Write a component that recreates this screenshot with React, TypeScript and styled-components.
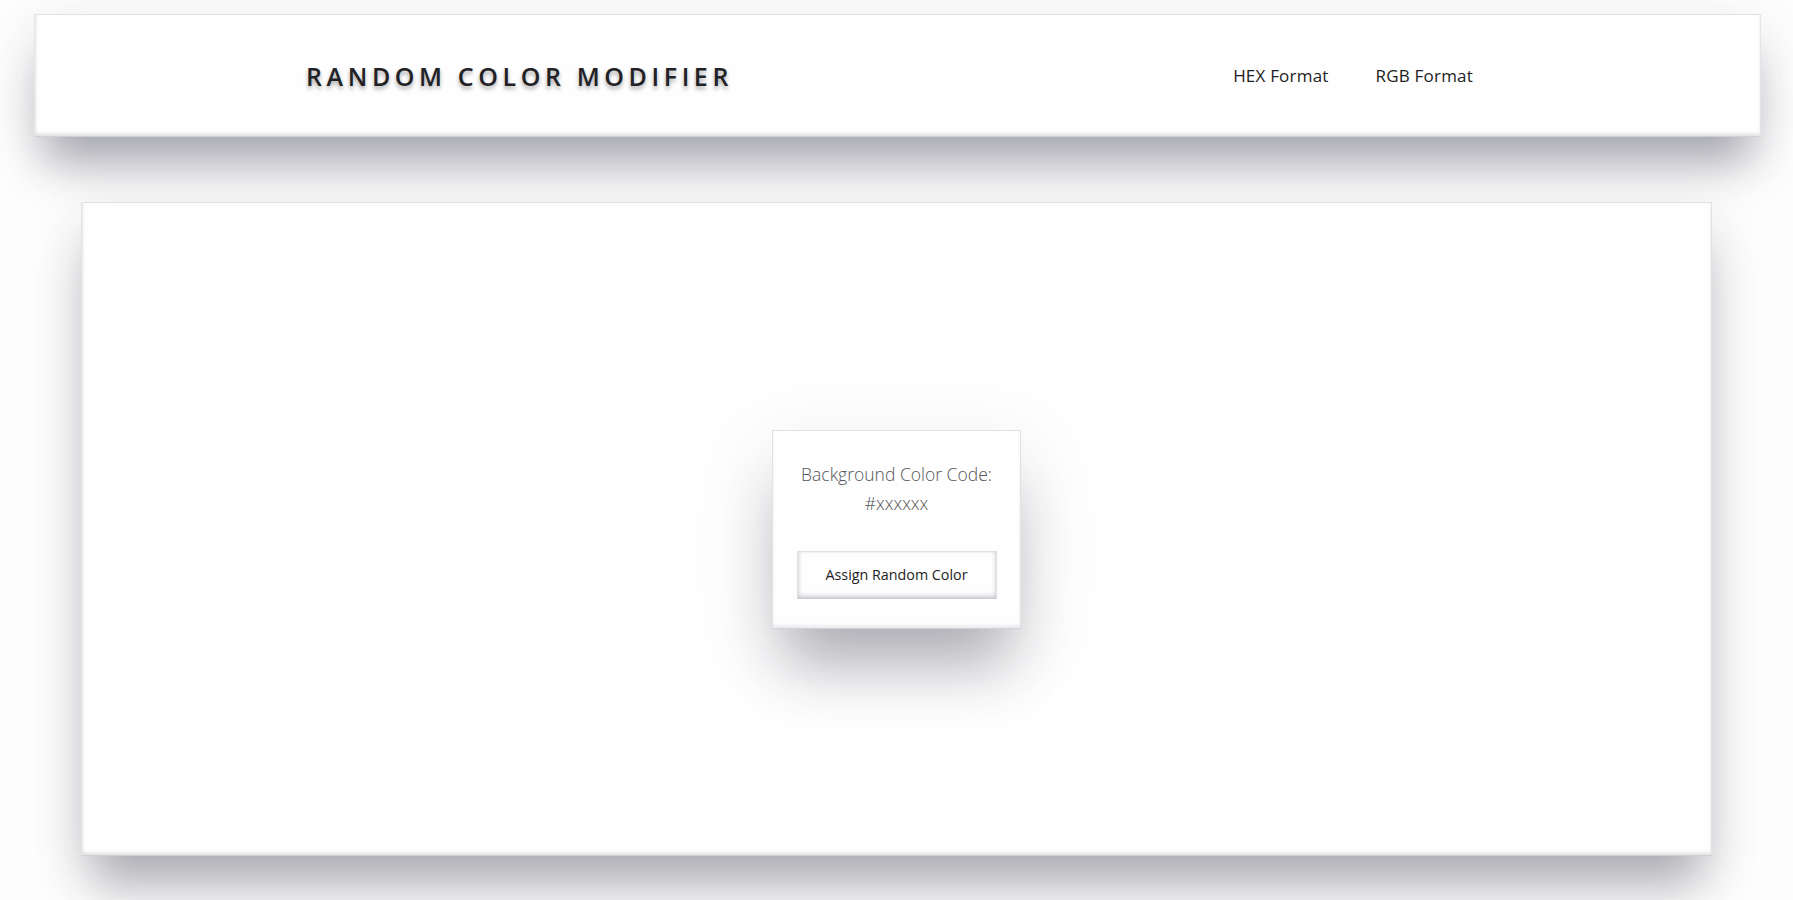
import styled, { createGlobalStyle } from "styled-components";

const GlobalStyle = createGlobalStyle`
   html, body {
      margin: 0;
      padding: 0;
      background-color: #fdfdfd;
      font-family: "Open Sans", "Liberation Sans", sans-serif;
   }
`;

const Page = styled.div`
   padding-top: 14px;
   min-height: 100vh;
   box-sizing: border-box;
`;

const Header = styled.header`
   height: 123px;
   margin: 0 32px 0 34px;
   box-sizing: border-box;
   background-color: #fefefe;
   border: 1px solid #e4e4e8;
   border-bottom-color: #cfcfd5;
   box-shadow: 0 38px 46px -12px rgba(40, 40, 60, 0.36), 0 12px 50px rgba(40, 40, 60, 0.1),
      inset 0 -3px 3px rgba(40, 40, 60, 0.1), inset 2px 0 2px rgba(40, 40, 60, 0.04);
   display: flex;
   align-items: center;
   justify-content: space-between;
   padding: 0 287px 0 271px;
`;

const Title = styled.h1`
   margin: 0;
   font-family: "Open Sans", "Liberation Sans", sans-serif;
   font-size: 25px;
   font-weight: 600;
   letter-spacing: 4.6px;
   color: #222226;
   text-shadow: 0 3px 4px rgba(0, 0, 0, 0.35);
`;

const Nav = styled.nav`
   display: flex;
   gap: 47px;
`;

const NavLink = styled.a`
   font-size: 17px;
   letter-spacing: 0.2px;
   color: #1d1d22;
   text-decoration: none;
   cursor: pointer;
`;

const Main = styled.main`
   width: 91%;
   height: 654px;
   margin: 65px auto 0;
   box-sizing: border-box;
   background-color: #fefefe;
   border: 1px solid #e2e2e6;
   border-bottom-color: #cfcfd5;
   box-shadow: 0 40px 46px -12px rgba(40, 40, 60, 0.34), 0 12px 50px rgba(40, 40, 60, 0.1),
      inset 0 -3px 3px rgba(40, 40, 60, 0.1), inset 2px 0 2px rgba(40, 40, 60, 0.04);
   display: flex;
   align-items: center;
   justify-content: center;
`;

const Card = styled.div`
   width: 249px;
   height: 199px;
   box-sizing: border-box;
   background-color: #fefefe;
   border: 1px solid #e2e2e6;
   border-bottom-color: #d0d0d6;
   box-shadow: 0 48px 56px -14px rgba(40, 40, 60, 0.32), 0 24px 80px rgba(40, 40, 60, 0.1),
      inset 0 -3px 3px rgba(40, 40, 60, 0.08);
   display: flex;
   flex-direction: column;
   align-items: center;
   padding: 29px 20px 0;
`;

const Label = styled.p`
   margin: 0;
   font-size: 17.5px;
   font-weight: 300;
   line-height: 29px;
   color: #555558;
   text-align: center;
   white-space: nowrap;
`;

const Button = styled.button`
   margin-top: 33px;
   width: 200px;
   height: 48px;
   background-color: #fefefe;
   border: 1px solid #dedee2;
   border-bottom-color: #c9c9d0;
   box-shadow: inset 0 -3px 4px rgba(40, 40, 60, 0.16), inset 2px 0 3px rgba(40, 40, 60, 0.06),
      inset -2px 0 3px rgba(40, 40, 60, 0.06);
   font-family: "Open Sans", "Liberation Sans", sans-serif;
   font-size: 14.3px;
   font-weight: 500;
   color: #1d1d22;
   cursor: pointer;
`;

const App = () => {
   return (
      <Page>
         <GlobalStyle />
         <Header>
            <Title>RANDOM COLOR MODIFIER</Title>
            <Nav>
               <NavLink>HEX Format</NavLink>
               <NavLink>RGB Format</NavLink>
            </Nav>
         </Header>
         <Main>
            <Card>
               <Label>
                  Background Color Code:
                  <br />
                  #xxxxxx
               </Label>
               <Button>Assign Random Color</Button>
            </Card>
         </Main>
      </Page>
   );
};

export default App;
